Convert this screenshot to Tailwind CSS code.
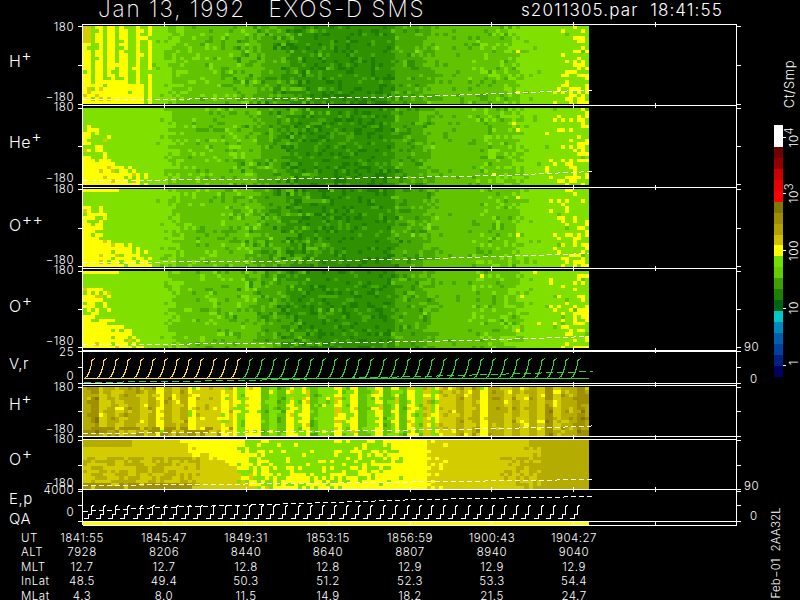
<!DOCTYPE html>
<html lang="en">
<head>
<meta charset="UTF-8" />
<title>EXOS-D SMS</title>
<script src="https://cdn.jsdelivr.net/npm/@tailwindcss/browser@4"></script>
</head>
<body class="bg-black">
<div class="relative w-[800px] h-[600px] overflow-hidden bg-black text-white font-['Inter',sans-serif] font-light text-[11.5px] leading-none tracking-[0.5px]">

  <!-- title -->
  <div class="h-[24px] relative">
    <div class="absolute left-[98px] top-[-2px] text-[22.5px] leading-[22px] tracking-[1.9px] [word-spacing:-0.8px] whitespace-pre font-extralight">Jan 13, 1992   EXOS-D SMS</div>
    <div class="absolute left-[521px] top-[0px] text-[17px] leading-[20px] tracking-[1.1px] whitespace-pre">s2011305.par  18:41:55</div>
  </div>

  <!-- H+ -->
  <div class="flex h-[81px]">
    <div class="relative w-[83px]">
      <span class="absolute right-[9px] top-[-2px]">180</span>
      <span class="absolute left-[9px] top-[29px] text-[16px]">H<sup class="text-[16px] -top-[6px]">+</sup></span>
      <span class="absolute right-[9px] top-[68px]">−180</span>
    </div>
    <div class="w-[654px] border-t border-white pt-[1px]"><canvas id="p1" width="506" height="78" class="block"></canvas></div>
  </div>
  <!-- He+ -->
  <div class="flex h-[82px]">
    <div class="relative w-[83px]">
      <span class="absolute right-[9px] top-[-3px]">180</span>
      <span class="absolute left-[9px] top-[29px] text-[16px]">He<sup class="text-[16px] -top-[6px]">+</sup></span>
      <span class="absolute right-[9px] top-[68px]">−180</span>
    </div>
    <div class="w-[654px] border-t border-white pt-[2px]"><canvas id="p2" width="506" height="77" class="block"></canvas></div>
  </div>
  <!-- O++ -->
  <div class="flex h-[81px]">
    <div class="relative w-[83px]">
      <span class="absolute right-[9px] top-[-3px]">180</span>
      <span class="absolute left-[9px] top-[30px] text-[16px]">O<sup class="text-[16px] -top-[6px]">++</sup></span>
      <span class="absolute right-[9px] top-[68px]">−180</span>
    </div>
    <div class="w-[654px] border-t border-white pt-[1px]"><canvas id="p3" width="506" height="78" class="block"></canvas></div>
  </div>
  <!-- O+ -->
  <div class="flex h-[82px]">
    <div class="relative w-[83px]">
      <span class="absolute right-[9px] top-[-3px]">180</span>
      <span class="absolute left-[9px] top-[30px] text-[16px]">O<sup class="text-[16px] -top-[6px]">+</sup></span>
      <span class="absolute right-[9px] top-[68px]">−180</span>
    </div>
    <div class="w-[654px] border-t border-white pt-[2px]"><canvas id="p4" width="506" height="77" class="block"></canvas></div>
  </div>
  <!-- V,r -->
  <div class="flex h-[33px]">
    <div class="relative w-[83px]">
      <span class="absolute right-[9px] top-[-3px]">25</span>
      <span class="absolute left-[9px] top-[6px] text-[15px]">V,r</span>
      <span class="absolute right-[9px] top-[21px]">0</span>
    </div>
    <div class="w-[654px] border-t-2 border-white"></div>
    <div class="relative">
      <span class="absolute left-[7px] top-[-8px]">90</span>
      <span class="absolute left-[13px] top-[24px]">0</span>
    </div>
  </div>
  <div class="flex h-[2px]"><div class="w-[83px]"></div><div class="w-[654px] border-t border-white"></div></div>
  <!-- H+ lower -->
  <div class="flex h-[51px]">
    <div class="relative w-[83px]">
      <span class="absolute right-[9px] top-[-3px]">180</span>
      <span class="absolute left-[9px] top-[11px] text-[16px]">H<sup class="text-[16px] -top-[6px]">+</sup></span>
      <span class="absolute right-[9px] top-[39px]">−180</span>
    </div>
    <div class="w-[654px] border-t border-white pt-[1px]"><canvas id="p5" width="506" height="49" class="block"></canvas></div>
  </div>
  <div class="flex h-[3px]"><div class="w-[83px]"></div><div class="w-[654px] border-t border-white"></div></div>
  <!-- O+ lower -->
  <div class="flex h-[50px]">
    <div class="relative w-[83px]">
      <span class="absolute right-[9px] top-[-5px]">180</span>
      <span class="absolute left-[9px] top-[12px] text-[16px]">O<sup class="text-[16px] -top-[6px]">+</sup></span>
      <span class="absolute right-[9px] top-[39px]">−180</span>
    </div>
    <div class="w-[654px] border-t border-white"><canvas id="p6" width="506" height="49" class="block"></canvas></div>
  </div>
  <!-- E,p / QA -->
  <div class="flex h-[32px]">
    <div class="relative w-[83px]">
      <span class="absolute right-[9px] top-[-4px]">4000</span>
      <span class="absolute left-[9px] top-[2px] text-[15px]">E,p</span>
      <span class="absolute right-[9px] top-[18px]">0</span>
      <span class="absolute left-[9px] top-[22px] text-[15px]">QA</span>
    </div>
    <div class="w-[654px] border-t border-white"></div>
    <div class="relative">
      <span class="absolute left-[7px] top-[-8px]">90</span>
      <span class="absolute left-[13px] top-[22px]">0</span>
    </div>
  </div>
  <div class="flex h-[5px]">
    <div class="w-[83px]"></div>
    <div class="w-[654px] h-[5px] border-y border-white"><div class="w-[506px] h-[3px] bg-[#ffff00]"></div></div>
  </div>

  <!-- orbit table -->
  <div class="grid grid-cols-[20px_repeat(7,82px)] auto-rows-[14.4px] pl-[21px] pt-[7px] text-center whitespace-nowrap">
    <span class="text-left">UT</span><span>1841:55</span><span>1845:47</span><span>1849:31</span><span>1853:15</span><span>1856:59</span><span>1900:43</span><span>1904:27</span>
    <span class="text-left">ALT</span><span>7928</span><span>8206</span><span>8440</span><span>8640</span><span>8807</span><span>8940</span><span>9040</span>
    <span class="text-left">MLT</span><span>12.7</span><span>12.7</span><span>12.8</span><span>12.8</span><span>12.9</span><span>12.9</span><span>12.9</span>
    <span class="text-left">InLat</span><span>48.5</span><span>49.4</span><span>50.3</span><span>51.2</span><span>52.3</span><span>53.3</span><span>54.4</span>
    <span class="text-left">MLat</span><span>4.3</span><span>8.0</span><span>11.5</span><span>14.9</span><span>18.2</span><span>21.5</span><span>24.7</span>
  </div>

  <!-- colour bar -->
  <div id="bar" class="absolute left-[774px] top-[125px] w-[9px] h-[252px] flex flex-col"></div>
  <span class="absolute left-[783px] top-[60px] text-[13px] [writing-mode:vertical-rl] rotate-180 whitespace-nowrap">Ct/Smp</span>
  <span class="absolute left-[788px] top-[127px] text-[12px] [writing-mode:vertical-rl] rotate-180 whitespace-nowrap">10<sup class="text-[11px] top-0 left-[5px]">4</sup></span>
  <span class="absolute left-[788px] top-[183px] text-[12px] [writing-mode:vertical-rl] rotate-180 whitespace-nowrap">10<sup class="text-[11px] top-0 left-[5px]">3</sup></span>
  <span class="absolute left-[788px] top-[240px] text-[12px] [writing-mode:vertical-rl] rotate-180 whitespace-nowrap">100</span>
  <span class="absolute left-[788px] top-[301px] text-[12px] [writing-mode:vertical-rl] rotate-180 whitespace-nowrap">10</span>
  <span class="absolute left-[788px] top-[360px] text-[12px] [writing-mode:vertical-rl] rotate-180 whitespace-nowrap">1</span>
  <span class="absolute left-[771px] top-[507px] text-[11.5px] tracking-[0.2px] [writing-mode:vertical-rl] rotate-180 whitespace-pre">Feb−01  2AA32L</span>

  <!-- axes, ticks and line plots drawn over the panels -->
  <svg id="over" class="absolute left-0 top-0" width="800" height="600" fill="none" stroke="#fff" stroke-width="1" shape-rendering="crispEdges"></svg>
</div>

<script>
  function seeded(s) {
    return function () {
      s = (s * 1664525 + 1013904223) % 4294967296;
      return s / 4294967296;
    };
  }
  function interp(pts, x) {
    if (x <= pts[0][0]) return pts[0][1];
    for (let i = 1; i < pts.length; i++) {
      if (x <= pts[i][0]) {
        const t = (x - pts[i - 1][0]) / (pts[i][0] - pts[i - 1][0]);
        return pts[i - 1][1] + t * (pts[i][1] - pts[i - 1][1]);
      }
    }
    return pts[pts.length - 1][1];
  }

  // darkest green .. lime, yellow, then olive up to the top of the scale
  const pal = ["#1f7d00", "#2f9000", "#46a800", "#62c400", "#80e000", "#ffff00", "#d2cc00", "#b4ac00", "#a09000", "#827800"];
  const navy = "#0a1a50";

  // x in absolute page pixels
  const greenBase = [[83, 4.5], [160, 4.2], [190, 3.7], [250, 3.2], [262, 2.8], [285, 2.0], [340, 1.3], [385, 1.2], [395, 2.3], [435, 3.2], [470, 3.5], [510, 3.9], [530, 4.4], [589, 4.7]];
  function noiseAmp(x) {
    return interp([[83, 0], [170, 0.05], [205, 0.8], [290, 1.2], [387, 1.1], [430, 0.8], [440, 0.25], [465, 0.3], [475, 0.9], [515, 0.8], [525, 0.3], [550, 0.3], [589, 0.6]], x);
  }

  function heat(id, seed, fn, cw, ch, dots) {
    const c = document.getElementById(id);
    const g = c.getContext("2d");
    const r = seeded(seed);
    const rows = Math.ceil(c.height / ch);
    const cols = Math.ceil(c.width / cw);
    for (let j = 0; j < rows; j++) {
      for (let i = 0; i < cols; i++) {
        const x = 83 + i * cw;
        const y = (j + 0.5) / rows;
        const v = fn(x, y, r, i, j);
        const k = Math.max(0, Math.min(9, Math.floor(v)));
        g.fillStyle = pal[k];
        g.fillRect(Math.round(i * cw), Math.round(j * ch), Math.round((i + 1) * cw) - Math.round(i * cw), Math.round((j + 1) * ch) - Math.round(j * ch));
      }
    }
    const top = c.getBoundingClientRect().top;
    (dots || []).forEach(function (d) {
      g.fillStyle = d[4] || navy;
      g.fillRect(d[0] - 83, d[1] - top, d[2], d[3]);
    });
  }

  function spread(x, y, r) {
    const a = noiseAmp(x);
    const n = r();
    let v = interp(greenBase, x) + (r() - 0.5) * 0.45;
    if (n < 0.26) v -= a * r() * 1.4;
    else if (n > 0.78) v += a * r() * 1.4;
    // yellow speckle towards the right edge, stronger low down
    if (x > 540 && r() < (x - 540) / 49 * (0.12 + 0.5 * y * y)) v = 5;
    return v;
  }
  function corner(x, y, r, reach, startY) {
    // solid yellow at lower left with a frayed slanted edge, plus a patch above it
    const edge = reach * Math.sqrt(Math.min(1, Math.max(0, (y - startY) / 0.2)));
    if (y > startY && x < 83 + edge) {
      const f = (x - 83) / Math.max(edge, 1);
      if (r() < 1 - f * f * f * 0.7) return true;
    }
    if (y > 0.22 && y < startY && x < 112 && r() < 0.85 - (x - 83) / 36) return true;
    return false;
  }

  const stripesP1 = [[83, 88], [96, 100], [108, 112], [120, 125], [135, 138], [145, 150]];
  heat("p1", 11, function (x, y, r) {
    if (x < 150) {
      const on = stripesP1.some(function (s) { return x >= s[0] - 1 && x < s[1]; });
      if (y > 0.72 && x < 140 && r() < 0.88) return x < 115 && y > 0.8 && r() < 0.3 ? 6.5 : 5;
      if (on) return x < 88 && y < 0.2 ? 6.5 : (r() < 0.12 ? 4 : 5);
      return r() < 0.06 ? 5 : 4;
    }
    return spread(x, y, r);
  }, 4.05, 3.4, [[223, 32, 3, 3], [227, 30, 2, 2], [230, 30, 2, 1], [232, 54, 2, 4], [235, 54, 2, 2], [238, 54, 2, 2], [240, 47, 1, 3]]);

  heat("p2", 23, function (x, y, r) {
    if (corner(x, y, r, 62, 0.64)) return r() < 0.06 ? 6 : 5;
    return spread(x, y, r);
  }, 4.05, 3.4, [[98, 117, 2, 4], [102, 120, 5, 3], [246, 149, 3, 3], [250, 151, 2, 3], [254, 151, 2, 2], [238, 142, 1, 3], [241, 139, 1, 2]]);

  heat("p3", 37, function (x, y, r) {
    if (y < 0.06 && x < 118) return 5;
    if (corner(x, y, r, 66, 0.62)) return r() < 0.05 ? 6 : 5;
    return spread(x, y, r);
  }, 4.05, 3.4, [[283, 204, 3, 3], [286, 202, 3, 3], [289, 203, 2, 2]]);

  heat("p4", 41, function (x, y, r) {
    if (y < 0.06 && x < 118) return 5;
    if (corner(x, y, r, 62, 0.64)) return r() < 0.05 ? 6 : 5;
    return spread(x, y, r);
  }, 4.05, 3.4, [[279, 277, 2, 7], [282, 274, 4, 4], [287, 276, 2, 2], [180, 295, 2, 3], [399, 281, 3, 4], [405, 278, 3, 3], [541, 302, 2, 3], [547, 299, 2, 4]]);

  const h2Base = [[83, 7.5], [150, 7.0], [200, 6.3], [225, 5.5], [265, 4.5], [375, 4.5], [415, 5.2], [450, 6.6], [520, 7.0], [589, 7.6]];
  const stripeSeq = [0, 0.9, -0.5, 0.6, -1.1, 0.3, 0.8, -0.8, 0.2, -1, 0.7, -0.4, 0.9, -0.9, 0.4];
  heat("p5", 53, function (x, y, r, i) {
    let v = interp(h2Base, x) + stripeSeq[Math.floor(i / 2) % stripeSeq.length];
    if (r() < 0.2) v += r() < 0.5 ? 1 : -1;
    if (y > 0.8 && x < 230 && r() < 0.4) v = 8.2;
    return v;
  }, 4.05, 3.3, [[278, 392, 5, 2], [241, 413, 3, 2], [194, 426, 4, 2, "#b00000"], [361, 409, 3, 1]]);

  heat("p6", 67, function (x, y, r) {
    const edge = interp([[0, 168], [0.3, 200], [0.6, 240], [1, 258]], y);
    const wob = (r() - 0.5) * 22;
    let v;
    if (x + wob < edge) {
      v = 6.5;
      if (y > 0.3 && x < 200 && r() < 0.45) v = 7.5;
      if (y > 0.85 && x < 190 && r() < 0.8) v = 8.2;
    } else if (x + wob < 437) v = 5.5;
    else if (x + wob < 530) v = 6.5;
    else v = 7.5;
    if (x < 130 && y < 0.12) v = 7.5;
    if (x > 235 && x < 400 && r() < 0.95 * Math.exp(-Math.pow((x - 310) / 75, 4) - Math.pow((y - 0.2) / 0.65, 2))) v = 4.5;
    if (x > 425 && x < 450 && r() < 0.5) v = 6.5;
    if (x > 500 && x < 530 && y > 0.3 && r() < 0.35) v = 7.5;
    return v;
  }, 4.05, 3.3, [[400, 451, 5, 4], [463, 448, 3, 2]]);

  // colour bar
  const barColors = ["#ffffff", "#ffffff", "#6e0000", "#900000", "#c80000", "#e80000", "#ff0000", "#807800", "#a08c00", "#b0a000", "#d0c000", "#ffff00", "#70e000", "#66cc00", "#3fa000", "#1f8000", "#006414", "#00c8c8", "#0088c0", "#0060b0", "#0040a0", "#002080", "#000060"];
  const bar = document.getElementById("bar");
  barColors.forEach(function (col) {
    const d = document.createElement("div");
    d.style.background = col;
    d.style.height = (252 / barColors.length) + "px";
    bar.appendChild(d);
  });

  // overlay
  const over = document.getElementById("over");
  function line(points, color, dash) {
    const p = document.createElementNS("http://www.w3.org/2000/svg", "polyline");
    p.setAttribute("points", points.map(function (q) { return q[0] + "," + q[1]; }).join(" "));
    if (color) p.setAttribute("stroke", color);
    if (dash) p.setAttribute("stroke-dasharray", dash);
    over.appendChild(p);
  }
  line([[82.5, 24], [82.5, 525]]);
  line([[736.5, 24], [736.5, 525]]);
  // y ticks on both axes
  [26, 65, 104, 108, 146, 184, 189, 228, 266, 271, 309, 347, 351, 367, 383, 387, 411, 436, 440, 465, 489, 491, 505, 521].forEach(function (y) {
    line([[78, y + 0.5], [83, y + 0.5]]);
    line([[737, y + 0.5], [741, y + 0.5]]);
  });
  // time ticks
  [164.5, 246.5, 328.5, 410.5, 491.5, 573.5, 655.5].forEach(function (x) {
    [24, 105, 187, 268, 350, 384, 437, 489, 523].forEach(function (y) {
      line([[x, y - 2], [x, y + 3]]);
    });
  });
  // colour bar ticks
  [137, 193, 250, 308, 365].forEach(function (y) { line([[783, y + 0.5], [786, y + 0.5]]); });

  const d = "5 3";
  line([[83, 99.5], [300, 98.5], [420, 96.5], [500, 93.5], [580, 90.5], [593, 90.5]], "#fff", d);
  line([[83, 180.5], [250, 179.5], [400, 177.5], [500, 175.5], [593, 171.5]], "#fff", d);
  line([[83, 262.5], [240, 261.5], [400, 259.5], [500, 256.5], [589, 253.5]], "#fff", d);
  line([[83, 344.5], [300, 343.5], [420, 341.5], [500, 339.5], [589, 336.5]], "#fff", d);
  line([[83, 433.5], [300, 431.5], [450, 429.5], [589, 426.5], [593, 425.5]], "#fff", d);
  line([[83, 485.5], [300, 483.5], [450, 481.5], [593, 479.5]], "#fff", d);
  line([[83, 511.5], [160, 507.5], [300, 503.5], [420, 499.5], [593, 496.5]], "#fff", d);

  // V,r sawtooth
  line([[84, 378.5], [240, 378.5]], "#ffe040");
  line([[240, 378.5], [589, 378.5]], "#30d040");
  line([[84, 382.5], [240, 380.5], [420, 376.5], [593, 371.5]], "#30d040", "7 4");
  for (let x = 84; x < 580; x += 12.15) {
    const c = x < 238 ? "#ffe040" : "#30d040";
    const b = Math.round(x);
    line([[b, 378.5], [b + 3, 376.5], [b + 5, 372.5], [b + 7, 366.5], [b + 8, 360.5], [b + 9, 359.5], [b + 11, 358.5]], c);
  }
  // E,p stair steps
  for (let x = 84; x < 580; x += 12.15) {
    const b = Math.round(x);
    line([[b, 518.5], [b + 4, 518.5], [b + 4, 514.5], [b + 7, 514.5], [b + 7, 506.5], [b + 10, 505.5]]);
  }
</script>
</body>
</html>
